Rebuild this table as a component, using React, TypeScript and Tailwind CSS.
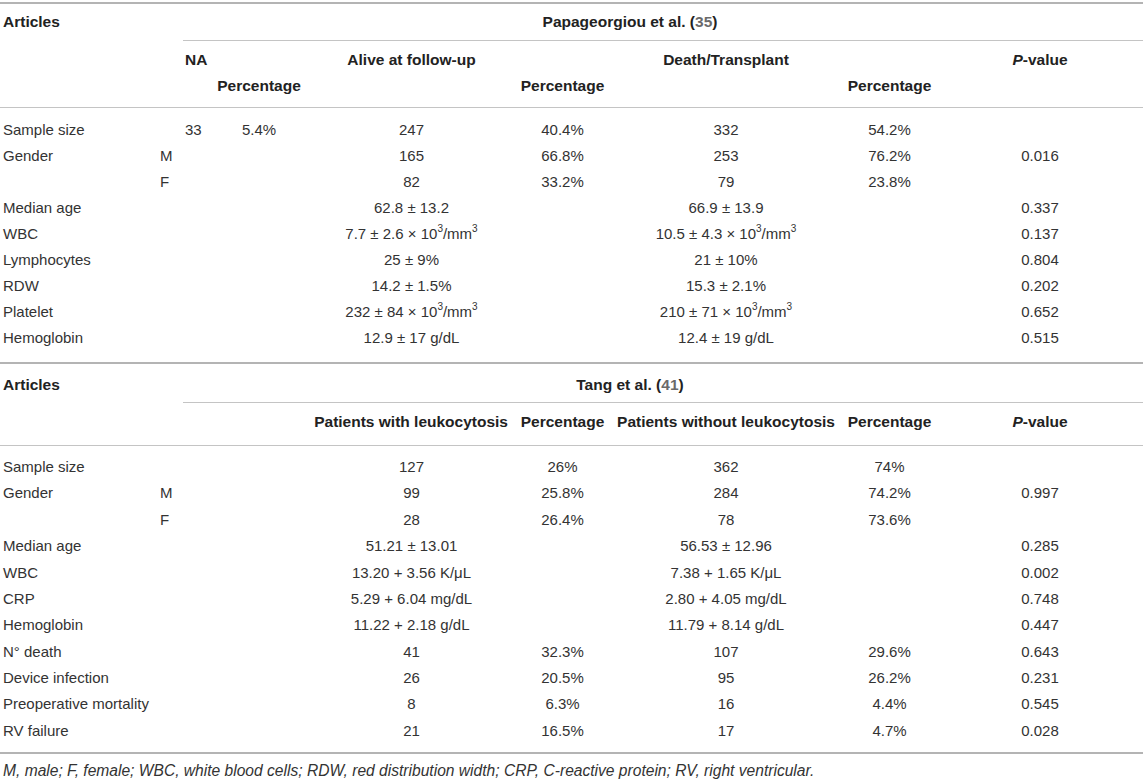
import type { ReactNode } from "react";

// shared column grid for both article tables
const COLS = "grid grid-cols-[155px_28px_27px_98px_207px_95px_232px_95px_206px]";

const ALIGN = [
  "justify-start pl-[3px]",
  "justify-start pl-[5px]",
  "justify-start pl-[2px]",
  "justify-center",
  "justify-center",
  "justify-center",
  "justify-center",
  "justify-center",
  "justify-center",
];

const Sup = ({ children }: { children: ReactNode }) => (
  <sup className="text-[10px]">{children}</sup>
);

const perMm3 = (
  <>
    10<Sup>3</Sup>/mm<Sup>3</Sup>
  </>
);

const PAPAGEORGIOU: ReactNode[][] = [
  ["Sample size", "", "33", "5.4%", "247", "40.4%", "332", "54.2%", ""],
  ["Gender", "M", "", "", "165", "66.8%", "253", "76.2%", "0.016"],
  ["", "F", "", "", "82", "33.2%", "79", "23.8%", ""],
  ["Median age", "", "", "", "62.8 ± 13.2", "", "66.9 ± 13.9", "", "0.337"],
  ["WBC", "", "", "", <>7.7 ± 2.6 × {perMm3}</>, "", <>10.5 ± 4.3 × {perMm3}</>, "", "0.137"],
  ["Lymphocytes", "", "", "", "25 ± 9%", "", "21 ± 10%", "", "0.804"],
  ["RDW", "", "", "", "14.2 ± 1.5%", "", "15.3 ± 2.1%", "", "0.202"],
  ["Platelet", "", "", "", <>232 ± 84 × {perMm3}</>, "", <>210 ± 71 × {perMm3}</>, "", "0.652"],
  ["Hemoglobin", "", "", "", "12.9 ± 17 g/dL", "", "12.4 ± 19 g/dL", "", "0.515"],
];

const TANG: ReactNode[][] = [
  ["Sample size", "", "", "", "127", "26%", "362", "74%", ""],
  ["Gender", "M", "", "", "99", "25.8%", "284", "74.2%", "0.997"],
  ["", "F", "", "", "28", "26.4%", "78", "73.6%", ""],
  ["Median age", "", "", "", "51.21 ± 13.01", "", "56.53 ± 12.96", "", "0.285"],
  ["WBC", "", "", "", "13.20 + 3.56 K/μL", "", "7.38 + 1.65 K/μL", "", "0.002"],
  ["CRP", "", "", "", "5.29 + 6.04 mg/dL", "", "2.80 + 4.05 mg/dL", "", "0.748"],
  ["Hemoglobin", "", "", "", "11.22 + 2.18 g/dL", "", "11.79 + 8.14 g/dL", "", "0.447"],
  ["N° death", "", "", "", "41", "32.3%", "107", "29.6%", "0.643"],
  ["Device infection", "", "", "", "26", "20.5%", "95", "26.2%", "0.231"],
  ["Preoperative mortality", "", "", "", "8", "6.3%", "16", "4.4%", "0.545"],
  ["RV failure", "", "", "", "21", "16.5%", "17", "4.7%", "0.028"],
];

function DataRows({ rows, tall }: { rows: ReactNode[][]; tall?: boolean }) {
  return (
    <>
      {rows.map((row, r) =>
        row.map((cell, c) => (
          <div
            key={`${r}-${c}`}
            className={`flex items-center whitespace-nowrap ${tall ? "h-[26.4px]" : "h-[26px]"} ${ALIGN[c]}`}
          >
            {cell}
          </div>
        ))
      )}
    </>
  );
}

const PValue = () => (
  <span>
    <i>P</i>-value
  </span>
);

export default function App() {
  return (
    <div className="w-[1143px] bg-white pt-[2px] font-['Liberation_Sans',Arial,sans-serif] text-[15px] text-[#333]">
      {/* Papageorgiou et al. */}
      <div className="border-t-2 border-[#b4b4b4]">
        <div className={COLS}>
          <div className="col-span-2 flex h-[36px] items-center pl-[3px] text-[15.5px] font-bold text-[#222]">Articles</div>
          <div className="col-span-7 flex h-[36px] items-center justify-center pr-[66px] text-[15.5px] font-bold text-[#222]">
            Papageorgiou et al. (<span className="text-[#6a6a6a]">35</span>)
          </div>
          <div className="col-span-2" />
          <div className="col-span-7 h-px bg-[#c4c4c4]" />

          {/* header line 1 */}
          <div className="col-span-2 h-[32px]" />
          <div className="flex h-[32px] items-end pl-[2px] text-[15.5px] leading-[26px] font-bold text-[#222]">NA</div>
          <div />
          <div className="flex h-[32px] items-end justify-center whitespace-nowrap text-[15.5px] leading-[26px] font-bold text-[#222]">Alive at follow-up</div>
          <div />
          <div className="flex h-[32px] items-end justify-center text-[15.5px] leading-[26px] font-bold text-[#222]">Death/Transplant</div>
          <div />
          <div className="flex h-[32px] items-end justify-center text-[15.5px] leading-[26px] font-bold text-[#222]"><PValue /></div>

          {/* header line 2 */}
          <div className="col-span-3 h-[26px]" />
          <div className="flex h-[26px] items-center justify-center text-[15.5px] font-bold text-[#222]">Percentage</div>
          <div />
          <div className="flex h-[26px] items-center justify-center text-[15.5px] font-bold text-[#222]">Percentage</div>
          <div />
          <div className="flex h-[26px] items-center justify-center text-[15.5px] font-bold text-[#222]">Percentage</div>
          <div />
          <div className="col-span-9 h-[8px]" />
          <div className="col-span-9 h-px bg-[#c4c4c4]" />
        </div>
        <div className={`${COLS} pt-[9px] pb-[11px]`}>
          <DataRows rows={PAPAGEORGIOU} />
        </div>
      </div>

      {/* Tang et al. */}
      <div className="border-y-2 border-[#b4b4b4]">
        <div className={COLS}>
          <div className="col-span-2 flex h-[38px] items-center pt-[4px] pl-[3px] text-[15.5px] font-bold text-[#222]">Articles</div>
          <div className="col-span-7 flex h-[38px] items-center justify-center pt-[4px] pr-[66px] text-[15.5px] font-bold text-[#222]">
            Tang et al. (<span className="text-[#6a6a6a]">41</span>)
          </div>
          <div className="col-span-2" />
          <div className="col-span-7 h-px bg-[#c4c4c4]" />

          <div className="col-span-2 h-[42px]" />
          <div className="col-span-3 flex h-[42px] items-center justify-end pt-[6px] pb-[10px] pr-[7px] whitespace-nowrap text-[15.5px] font-bold text-[#222]">
            Patients with leukocytosis
          </div>
          <div className="flex h-[42px] items-center justify-center pt-[6px] pb-[10px] text-[15.5px] font-bold text-[#222]">Percentage</div>
          <div className="flex h-[42px] items-center justify-center pt-[6px] pb-[10px] whitespace-nowrap text-[15.5px] font-bold text-[#222]">Patients without leukocytosis</div>
          <div className="flex h-[42px] items-center justify-center pt-[6px] pb-[10px] text-[15.5px] font-bold text-[#222]">Percentage</div>
          <div className="flex h-[42px] items-center justify-center pt-[6px] pb-[10px] text-[15.5px] font-bold text-[#222]"><PValue /></div>
          <div className="col-span-9 h-px bg-[#c4c4c4]" />
        </div>
        <div className={`${COLS} pt-[8px] pb-[8px]`}>
          <DataRows rows={TANG} tall />
        </div>
      </div>

      <p className="pt-[7px] pl-[3px] text-[15.6px] leading-[20px] italic text-[#333]">
        M, male; F, female; WBC, white blood cells; RDW, red distribution width; CRP, C-reactive protein; RV, right ventricular.
      </p>
    </div>
  );
}
